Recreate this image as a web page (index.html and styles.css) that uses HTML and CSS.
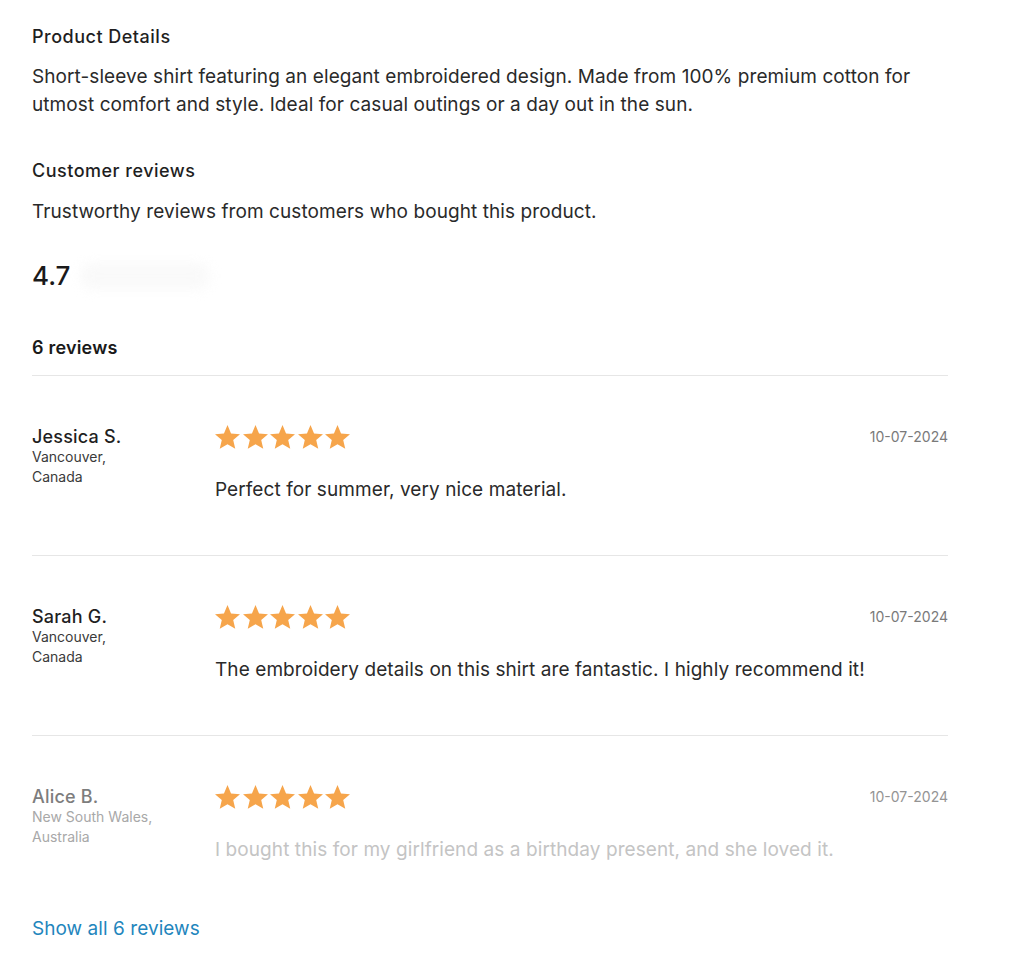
FILE: index.html
```html
<!DOCTYPE html>
<html lang="en">
<head>
<meta charset="utf-8">
<title>Product Details</title>
<link rel="stylesheet" href="styles.css">
</head>
<body>
<main class="page">
  <section class="details">
    <h2 class="heading">Product Details</h2>
    <p class="text">Short-sleeve shirt featuring an elegant embroidered design. Made from 100% premium cotton for utmost comfort and style. Ideal for casual outings or a day out in the sun.</p>
  </section>

  <section class="reviews">
    <h2 class="heading">Customer reviews</h2>
    <p class="text">Trustworthy reviews from customers who bought this product.</p>
    <div class="summary">
      <span class="score">4.7</span>
      <span class="blur"></span>
    </div>
    <h3 class="count">6 reviews</h3>

    <ul class="list">
      <li class="review">
        <div class="author">
          <div class="name">Jessica S.</div>
          <div class="loc">Vancouver,<br>Canada</div>
        </div>
        <div class="body">
          <div class="top">
            <div class="stars">
              <svg viewBox="1.6 1.8 20.8 19.8"><path d="M12 1.8l2.95 6.9 7.45.65-5.65 4.9 1.7 7.3L12 17.7l-6.45 3.85 1.7-7.3L1.6 9.35l7.45-.65z"/></svg>
              <svg viewBox="1.6 1.8 20.8 19.8"><path d="M12 1.8l2.95 6.9 7.45.65-5.65 4.9 1.7 7.3L12 17.7l-6.45 3.85 1.7-7.3L1.6 9.35l7.45-.65z"/></svg>
              <svg viewBox="1.6 1.8 20.8 19.8"><path d="M12 1.8l2.95 6.9 7.45.65-5.65 4.9 1.7 7.3L12 17.7l-6.45 3.85 1.7-7.3L1.6 9.35l7.45-.65z"/></svg>
              <svg viewBox="1.6 1.8 20.8 19.8"><path d="M12 1.8l2.95 6.9 7.45.65-5.65 4.9 1.7 7.3L12 17.7l-6.45 3.85 1.7-7.3L1.6 9.35l7.45-.65z"/></svg>
              <svg viewBox="1.6 1.8 20.8 19.8"><path d="M12 1.8l2.95 6.9 7.45.65-5.65 4.9 1.7 7.3L12 17.7l-6.45 3.85 1.7-7.3L1.6 9.35l7.45-.65z"/></svg>
            </div>
            <div class="date">10-07-2024</div>
          </div>
          <p class="comment">Perfect for summer, very nice material.</p>
        </div>
      </li>
      <li class="review">
        <div class="author">
          <div class="name">Sarah G.</div>
          <div class="loc">Vancouver,<br>Canada</div>
        </div>
        <div class="body">
          <div class="top">
            <div class="stars">
              <svg viewBox="1.6 1.8 20.8 19.8"><path d="M12 1.8l2.95 6.9 7.45.65-5.65 4.9 1.7 7.3L12 17.7l-6.45 3.85 1.7-7.3L1.6 9.35l7.45-.65z"/></svg>
              <svg viewBox="1.6 1.8 20.8 19.8"><path d="M12 1.8l2.95 6.9 7.45.65-5.65 4.9 1.7 7.3L12 17.7l-6.45 3.85 1.7-7.3L1.6 9.35l7.45-.65z"/></svg>
              <svg viewBox="1.6 1.8 20.8 19.8"><path d="M12 1.8l2.95 6.9 7.45.65-5.65 4.9 1.7 7.3L12 17.7l-6.45 3.85 1.7-7.3L1.6 9.35l7.45-.65z"/></svg>
              <svg viewBox="1.6 1.8 20.8 19.8"><path d="M12 1.8l2.95 6.9 7.45.65-5.65 4.9 1.7 7.3L12 17.7l-6.45 3.85 1.7-7.3L1.6 9.35l7.45-.65z"/></svg>
              <svg viewBox="1.6 1.8 20.8 19.8"><path d="M12 1.8l2.95 6.9 7.45.65-5.65 4.9 1.7 7.3L12 17.7l-6.45 3.85 1.7-7.3L1.6 9.35l7.45-.65z"/></svg>
            </div>
            <div class="date">10-07-2024</div>
          </div>
          <p class="comment">The embroidery details on this shirt are fantastic. I highly recommend it!</p>
        </div>
      </li>
      <li class="review faded">
        <div class="author">
          <div class="name">Alice B.</div>
          <div class="loc">New South Wales,<br>Australia</div>
        </div>
        <div class="body">
          <div class="top">
            <div class="stars">
              <svg viewBox="1.6 1.8 20.8 19.8"><path d="M12 1.8l2.95 6.9 7.45.65-5.65 4.9 1.7 7.3L12 17.7l-6.45 3.85 1.7-7.3L1.6 9.35l7.45-.65z"/></svg>
              <svg viewBox="1.6 1.8 20.8 19.8"><path d="M12 1.8l2.95 6.9 7.45.65-5.65 4.9 1.7 7.3L12 17.7l-6.45 3.85 1.7-7.3L1.6 9.35l7.45-.65z"/></svg>
              <svg viewBox="1.6 1.8 20.8 19.8"><path d="M12 1.8l2.95 6.9 7.45.65-5.65 4.9 1.7 7.3L12 17.7l-6.45 3.85 1.7-7.3L1.6 9.35l7.45-.65z"/></svg>
              <svg viewBox="1.6 1.8 20.8 19.8"><path d="M12 1.8l2.95 6.9 7.45.65-5.65 4.9 1.7 7.3L12 17.7l-6.45 3.85 1.7-7.3L1.6 9.35l7.45-.65z"/></svg>
              <svg viewBox="1.6 1.8 20.8 19.8"><path d="M12 1.8l2.95 6.9 7.45.65-5.65 4.9 1.7 7.3L12 17.7l-6.45 3.85 1.7-7.3L1.6 9.35l7.45-.65z"/></svg>
            </div>
            <div class="date">10-07-2024</div>
          </div>
          <p class="comment">I bought this for my girlfriend as a birthday present, and she loved it.</p>
        </div>
      </li>
    </ul>

    <a class="show-all" href="#">Show all 6 reviews</a>
  </section>
</main>
</body>
</html>
```

FILE: styles.css
```css
* { box-sizing: border-box; }

html, body {
  margin: 0;
  padding: 0;
  background: #ffffff;
}

body {
  font-family: Inter, "Noto Sans", "Liberation Sans", sans-serif;
  color: #1f1f1f;
}

.page {
  width: 916px;
  margin-left: 32px;
  padding-top: 25px;
}

.heading {
  margin: 0;
  font-size: 18px;
  line-height: 24px;
  font-weight: 500;
  letter-spacing: 0.5px;
  color: #1f1f1f;
}

.text {
  margin: 14px 0 0;
  font-size: 19px;
  line-height: 28px;
  font-weight: 400;
  letter-spacing: 0.08px;
  color: #2a2a2a;
}

.reviews {
  margin-top: 40px;
}

.reviews .text {
  margin-top: 15px;
}

.summary {
  display: flex;
  align-items: center;
  gap: 10px;
  margin-top: 34px;
  height: 32px;
}

.score {
  font-size: 26px;
  line-height: 32px;
  font-weight: 500;
  color: #1a1a1a;
}

.blur {
  width: 130px;
  height: 26px;
  background: #f7f7f7;
  border-radius: 12px;
  filter: blur(6px);
  opacity: 0.7;
}

.count {
  margin: 44px 0 0;
  font-size: 18px;
  line-height: 24px;
  font-weight: 600;
  letter-spacing: 0.2px;
  color: #1a1a1a;
}

.list {
  list-style: none;
  margin: 15px 0 0;
  padding: 0;
}

.review {
  display: flex;
  align-items: flex-start;
  height: 180px;
  padding-top: 51px;
  border-top: 1px solid #e6e6e6;
}

.author {
  width: 183px;
  flex: none;
}

.name {
  font-size: 18px;
  line-height: 20px;
  font-weight: 500;
  letter-spacing: 0.2px;
  color: #1f1f1f;
}

.loc {
  font-size: 14px;
  line-height: 20px;
  color: #3a3a3a;
}

.body {
  flex: 1;
  min-width: 0;
}

.top {
  display: flex;
  justify-content: space-between;
  align-items: flex-start;
}

.stars {
  display: flex;
  gap: 2.5px;
  height: 24px;
  margin-top: -2px;
}

.stars svg {
  width: 25px;
  height: 24px;
  fill: #f6a54b;
}

.comment {
  margin: 27px 0 0;
  font-size: 19px;
  line-height: 28px;
  letter-spacing: 0.08px;
  color: #2a2a2a;
}

.date {
  font-size: 14px;
  line-height: 20px;
  color: #7a7a7a;
}

.faded .name { color: #7d7d7d; }
.faded .loc { color: #a8a8a8; }
.faded .comment { color: #c4c4c4; }
.faded .date { color: #949494; }

.show-all {
  display: inline-block;
  margin-top: 2px;
  font-size: 19px;
  line-height: 24px;
  letter-spacing: 0.05px;
  color: #1f86bd;
  text-decoration: none;
}
```
